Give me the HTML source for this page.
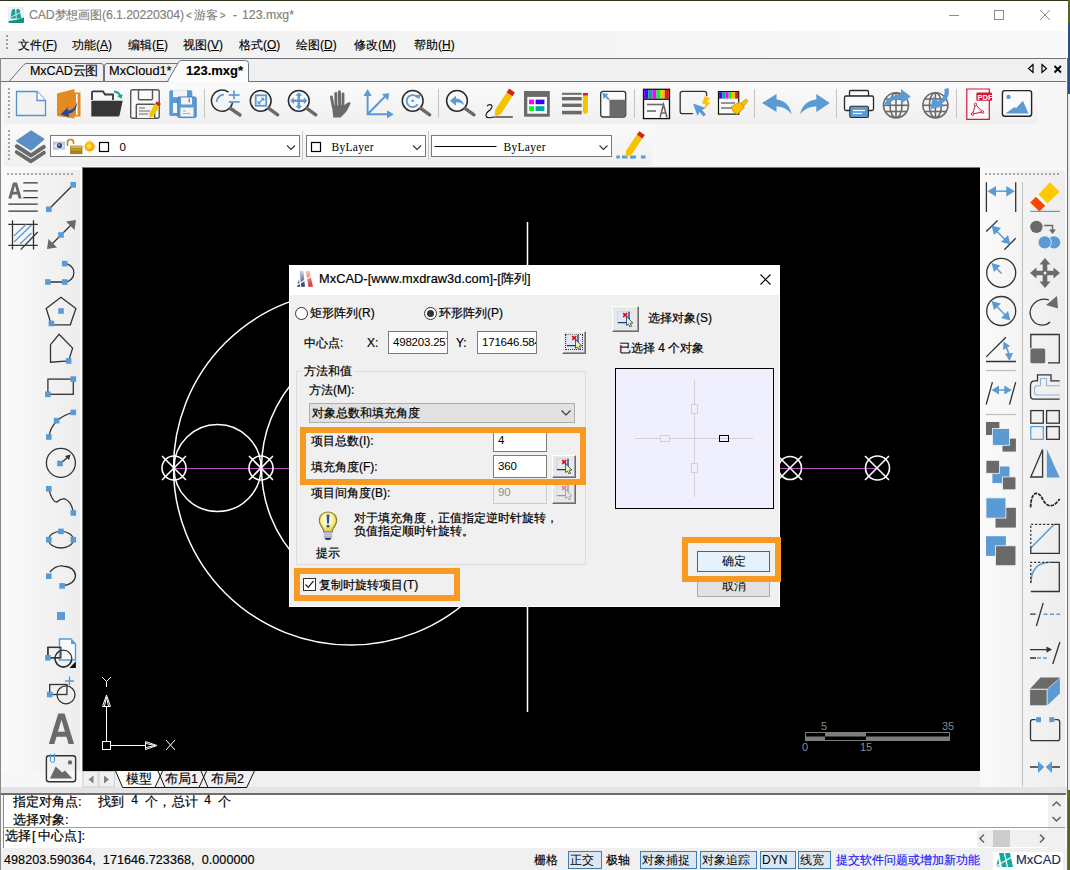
<!DOCTYPE html>
<html><head><meta charset="utf-8">
<style>
*{box-sizing:border-box;margin:0;padding:0}
html,body{width:1070px;height:870px;overflow:hidden;background:#f7f7f7;font-family:"Liberation Sans",sans-serif;font-size:12px;color:#000}
.a{position:absolute}
svg{position:absolute;overflow:visible}
.t{position:absolute;white-space:nowrap;line-height:14px}
u{text-decoration:underline}

.ed{background:#fff;border:1px solid #7a7a7a;padding:3px 0 0 4px;line-height:15px;overflow:hidden;white-space:nowrap;font-size:11.5px;letter-spacing:-0.2px}
.pk{width:24px;height:23px;background:#e8e8e8;border:1px solid;border-color:#fff #6a6a6a #6a6a6a #fff;box-shadow:inset -1px -1px 0 #a0a0a0}
.btn{width:73px;height:21px;background:#e1e1e1;border:1px solid #adadad;text-align:center;line-height:19px}
.ob{border:6px solid #f79a22}
.cm{font-size:13px;white-space:pre;line-height:15px}
.mo{font-family:"Liberation Mono",monospace;font-size:12px}
.sb{top:851px;height:18px;border:1px solid #3c7fb1;background:#dbe7f3;text-align:left;padding-left:1px;line-height:16px;white-space:nowrap;overflow:hidden}
.t{-webkit-text-stroke-width:0.15px}
#dlg .t,.cm{-webkit-text-stroke-width:0.2px}
</style></head><body>

<svg width="0" height="0" style="position:absolute">
<defs>
<linearGradient id="pkg" x1="0" y1="0" x2="1" y2="1"><stop offset="0" stop-color="#c9d6e6"/><stop offset="1" stop-color="#f4f9ff"/></linearGradient>
<symbol id="pickic" viewBox="0 0 16 16">
<rect x="0.8" y="0.8" width="11.5" height="10.5" fill="#dfe9f5" stroke="#b8c8dc" stroke-width="0.6"/>
<path d="M0.8 11.6L12 11.6L12 0.8" fill="none" stroke="#1a3a7a" stroke-width="1.3"/>
<path d="M6.2 2.2L10.2 5.8M10.2 2.2L6.2 5.8" stroke="#e00" stroke-width="1.6"/>
<path d="M9.5 5.5L9.5 14.5L11.5 13L13 16L14.6 15.2L13.3 12.3L15.8 12Z" fill="#f6f3a0" stroke="#1a3a7a" stroke-width="0.8"/>
</symbol>
</defs></svg>
<!-- frame -->
<div class="a" style="left:0;top:0;width:1070px;height:1px;background:#2c3318"></div>
<div class="a" style="left:1068px;top:0;width:2px;height:23px;background:#56661e"></div>
<div class="a" style="left:1068px;top:23px;width:2px;height:71px;background:#2c4f8c"></div>
<div class="a" style="left:1068px;top:94px;width:2px;height:696px;background:#ececec"></div>
<div class="a" style="left:1068px;top:790px;width:2px;height:80px;background:#56661e"></div>
<div class="a" style="left:1067px;top:58px;width:1px;height:812px;background:#6b6b6b"></div>
<div class="a" style="left:0;top:31px;width:1px;height:839px;background:#8a8a8a"></div>
<!-- title bar -->
<div class="a" style="left:0;top:1px;width:1068px;height:30px;background:#fff"></div>
<svg style="left:0;top:0" width="30" height="30" viewBox="0 0 30 30">
<rect x="8" y="7" width="16" height="16" rx="1.5" fill="#efefef"/>
<path d="M10.3 18.5L11.8 10.5Q12.2 9 13.8 9L14.5 9Q15.3 9 15.4 10.5L16.2 18.5Z M16.2 18.5L16 10.5Q16 9 17.5 9L18.3 9Q19.6 9 19.9 10.5L21.3 18.5Z" fill="#1aa193"/><path d="M15.8 9L16.2 18.5" stroke="#efefef" stroke-width="0.8"/>
<path d="M10 17.5L21.5 12" stroke="#efefef" stroke-width="0.9"/>
<path d="M8.5 21Q16 20.5 24 17.5L24 22Q24 23 23 23L9.5 23Q8.5 23 8.5 22Z" fill="#148f80"/>
</svg>
<div class="t" style="left:29px;top:8px;color:#808080;font-size:12.3px;letter-spacing:-0.12px">CAD梦想画图(6.1.20220304)</div>
<div class="t" style="left:186px;top:8px;color:#808080;font-size:12.3px"><span style="font-size:10px;margin-right:2px">&lt;</span>游客<span style="font-size:10px;margin-left:2px">&gt;</span></div>
<div class="t" style="left:233px;top:8px;color:#808080;font-size:12.3px">-</div>
<div class="t" style="left:242px;top:8px;color:#808080;font-size:12.3px">123.mxg*</div>
<svg style="left:949px;top:10px" width="102" height="11" viewBox="0 0 102 11">
<g stroke="#8c8c8c" stroke-width="1" fill="none">
<line x1="0" y1="5.5" x2="10" y2="5.5"/>
<rect x="45.5" y="0.5" width="9" height="9"/>
<path d="M91 0L101 10M101 0L91 10"/>
</g></svg>
<!-- menu bar -->
<div class="a" style="left:0;top:31px;width:1068px;height:27px;background:linear-gradient(90deg,#f0f0f0,#f9f9f9)"></div>
<div class="a" style="left:6px;top:35px;width:2px;height:16px;background:repeating-linear-gradient(#a0a0a0 0 2px,transparent 2px 4px)"></div>
<div class="t" style="left:18px;top:38px">文件(<u>F</u>)</div>
<div class="t" style="left:72px;top:38px">功能(<u>A</u>)</div>
<div class="t" style="left:128px;top:38px">编辑(<u>E</u>)</div>
<div class="t" style="left:183px;top:38px">视图(<u>V</u>)</div>
<div class="t" style="left:239px;top:38px">格式(<u>O</u>)</div>
<div class="t" style="left:296px;top:38px">绘图(<u>D</u>)</div>
<div class="t" style="left:354px;top:38px">修改(<u>M</u>)</div>
<div class="t" style="left:414px;top:38px">帮助(<u>H</u>)</div>
<!-- tab strip -->
<div class="a" style="left:1px;top:58px;width:1065px;height:1px;background:#6e737a"></div>
<div class="a" style="left:1px;top:59px;width:1065px;height:22px;background:#f0f0f0"></div>
<div class="a" style="left:1px;top:81px;width:1065px;height:1px;background:#6e737a"></div>
<svg style="left:0;top:58px" width="260" height="25" viewBox="0 58 260 25">
<path d="M9.5 81L24 64.5Q25 63.5 27 63.5L101 63.5Q103.5 63.5 103.5 66L103.5 81" fill="#f0f0f0" stroke="#6e737a" stroke-width="1"/>
<path d="M104.5 81L104.5 66Q104.5 63.5 107 63.5L178 63.5" fill="#f0f0f0" stroke="#6e737a" stroke-width="1"/>
<path d="M167.5 81.5L179 61.5Q180 60.5 182 60.5L245.5 60.5Q248.5 60.5 248.5 63.5L248.5 81.5Z" fill="#fcfcfc" stroke="#6e737a" stroke-width="1"/>
<rect x="168.5" y="81" width="79.5" height="1.5" fill="#fcfcfc"/>
</svg>
<div class="t" style="left:30px;top:64px;font-size:12.5px;letter-spacing:-0.1px">MxCAD云图</div>
<div class="t" style="left:109px;top:64px;font-size:12.8px">MxCloud1*</div>
<div class="t" style="left:186px;top:64px;font-size:13px;font-weight:bold">123.mxg*</div>
<svg style="left:1027px;top:63px" width="36" height="11" viewBox="0 0 36 11">
<path d="M6 1.5L1.5 5.5L6 9.5Z" fill="none" stroke="#000" stroke-width="1.2"/>
<path d="M15 1.5L19.5 5.5L15 9.5Z" fill="none" stroke="#000" stroke-width="1.2"/>
<path d="M27.5 3L34 9.5M34 3L27.5 9.5" stroke="#000" stroke-width="1.8"/>
</svg>
<!-- toolbar bands -->
<div class="a" style="left:4px;top:84px;width:1034px;height:40px;background:linear-gradient(#fafafa,#efefef);border-radius:4px 0 5px 0"></div>
<div class="a" style="left:4px;top:126px;width:648px;height:40px;background:linear-gradient(#fafafa,#efefef);border-radius:4px 0 5px 0"></div>
<div class="a" style="left:8px;top:88px;width:2px;height:30px;background:repeating-linear-gradient(#a8a8a8 0 2px,transparent 2px 4px)"></div>
<div class="a" style="left:8px;top:130px;width:2px;height:30px;background:repeating-linear-gradient(#a8a8a8 0 2px,transparent 2px 4px)"></div>
<svg style="left:0;top:80px" width="1070" height="90" viewBox="0 80 1070 90">
<defs>
<g id="mag"><circle cx="0" cy="0" r="10.4" fill="#f8f8f8" stroke="#2a2a2a" stroke-width="1.5"/><path d="M8 7.6L17 14" stroke="#6a6a6a" stroke-width="3.4" stroke-linecap="round"/></g>
</defs>
<!-- separators -->
<g stroke="#c4c4c4" stroke-width="1">
<line x1="204.5" y1="89" x2="204.5" y2="118"/><line x1="438.5" y1="89" x2="438.5" y2="118"/>
<line x1="634.5" y1="89" x2="634.5" y2="118"/><line x1="754.5" y1="89" x2="754.5" y2="118"/>
<line x1="836.5" y1="89" x2="836.5" y2="118"/><line x1="956.5" y1="89" x2="956.5" y2="118"/>
</g>
<!-- 1 new -->
<path d="M16.5 91.5L37 91.5L45.5 100.5L45.5 115.5L16.5 115.5Z" fill="#f2f2f2" stroke="#5a92c8" stroke-width="1.3"/>
<path d="M37 91.5L37 100.5L45.5 100.5" fill="#fff" stroke="#5a92c8" stroke-width="1.3"/>
<!-- 2 open orange -->
<path d="M74 92.5L80.5 92.5L80.5 116.5L74 116.5Z" fill="#e38b22"/>
<rect x="76" y="94" width="1.6" height="21" fill="#fff"/>
<path d="M57 93.5L74.5 89L74.5 118.5L57 116Z" fill="#e38b22"/>
<path d="M76.8 101.5C76 107 73 110 67.5 110.5L68 107L60.5 114.5L69 117L68.5 113.8C74 113 77.5 108 76.8 101.5Z" fill="#1b4a9a"/>
<!-- 3 open folder -->
<path d="M92 100L92 92.5Q92 91.3 93.3 91.3L103 91.3L105 94.5L113 94.5L113 100" fill="none" stroke="#363636" stroke-width="1.8"/>
<path d="M91.3 116.5L91.3 101.5Q91.3 100.8 92.5 100.8L122.7 100.8L119.5 115.5Q119.3 116.5 118 116.5Z" fill="#363636"/>
<path d="M114 91.5Q119 92 120 96" fill="none" stroke="#1aa39a" stroke-width="1.8"/><path d="M117 96L121.5 99L122.5 94Z" fill="#1aa39a"/>
<!-- 4 save -->
<rect x="130.7" y="89.7" width="28.5" height="28.5" rx="2" fill="#fafafa" stroke="#555" stroke-width="1.4"/>
<path d="M138.5 89.7L138.5 98.5Q138.5 99.7 139.7 99.7L151.3 99.7Q152.5 99.7 152.5 98.5L152.5 89.7" fill="none" stroke="#555" stroke-width="1.4"/>
<path d="M136.3 118L136.3 105.5Q136.3 104.3 137.5 104.3L153.5 104.3Q154.7 104.3 154.7 105.5L154.7 118" fill="#f4f4f4" stroke="#555" stroke-width="1.4"/>
<g stroke="#888" stroke-width="1.3"><line x1="139" y1="108" x2="145" y2="108"/><line x1="139" y1="111" x2="150" y2="111"/><line x1="139" y1="114" x2="148" y2="114"/></g>
<path d="M149.5 118.0 L153.7 115.9 L159.4 106.4 L155.1 103.8 L149.4 113.3Z" fill="#f5c400"/><path d="M159.4 106.4 L160.9 103.8 L156.7 101.2 L155.1 103.8Z" fill="#d42020"/>
<!-- 5 save as -->
<rect x="169.3" y="90.2" width="23" height="25.8" rx="1.5" fill="#5b9bd5"/>
<rect x="173" y="90.2" width="14" height="7" fill="#f4f4f4"/><rect x="173" y="103" width="5" height="10" fill="#f4f4f4"/>
<rect x="177.7" y="96.9" width="18.5" height="20.7" rx="1.5" fill="#5b9bd5" stroke="#3a73b0" stroke-width="0.8"/>
<rect x="181" y="97.5" width="11" height="7" fill="#f4f4f4"/><rect x="188.5" y="98.5" width="1.5" height="4" fill="#888"/>
<rect x="180.5" y="107.5" width="13" height="9" fill="#f4f4f4"/>
<g stroke="#999" stroke-width="0.8"><line x1="183" y1="111" x2="186" y2="111"/><line x1="183" y1="113.5" x2="190" y2="113.5"/></g>
<!-- 6 zoom realtime -->
<path d="M232.5 102.5A10.6 10.6 0 1 1 228.5 92.2" fill="none" stroke="#2a2a2a" stroke-width="1.5"/>
<path d="M230.5 108.5L240 115" stroke="#6a6a6a" stroke-width="3.4" stroke-linecap="round"/>
<path d="M216.7 101.9A7.2 7.2 0 0 1 223.9 94.7" fill="none" stroke="#5b9bd5" stroke-width="1.7"/>
<g stroke="#5b9bd5" stroke-width="1.7"><line x1="228.7" y1="95" x2="239.6" y2="95"/><line x1="234" y1="90.6" x2="234" y2="99.3"/><line x1="228.7" y1="101.9" x2="239.6" y2="101.9"/></g>
<!-- 7 zoom window -->
<g transform="translate(260.7 100.8)"><use href="#mag"/><rect x="-5" y="-5.5" width="10.5" height="10.5" fill="none" stroke="#5b9bd5" stroke-width="1.8"/><path d="M-2.5 3L3 -2.5M-2.5 3L-2.5 0.5M-2.5 3L0 3M3 -2.5L0.5 -2.5M3 -2.5L3 0" stroke="#5b9bd5" stroke-width="1.3" fill="none"/></g>
<!-- 8 zoom pan -->
<g transform="translate(298.8 100.8)"><use href="#mag"/><path d="M0 -8.5L3.5 -5L1.2 -5L1.2 -1.2L5 -1.2L5 -3.5L8.5 0L5 3.5L5 1.2L1.2 1.2L1.2 5L3.5 5L0 8.5L-3.5 5L-1.2 5L-1.2 1.2L-5 1.2L-5 3.5L-8.5 0L-5 -3.5L-5 -1.2L-1.2 -1.2L-1.2 -5L-3.5 -5Z" fill="#5b9bd5"/></g>
<!-- 9 hand -->
<path d="M333.3 117.6L332 106L344.5 105L348 102.5Q350.5 101.5 350.6 103.5L346.5 111.5L340.6 117.6Z" fill="#6a6a6a"/>
<g stroke="#6a6a6a" stroke-linecap="round" fill="none">
<path d="M331.4 97L333.2 107" stroke-width="2.8"/>
<path d="M335.8 93.5L336 106" stroke-width="3"/>
<path d="M339.4 91.8L339.7 106" stroke-width="3"/>
<path d="M343 93.8L343 106" stroke-width="2.8"/>
</g>
<!-- 10 axes -->
<g stroke="#5b9bd5" stroke-width="2" fill="none"><path d="M367.6 95L367.6 114.3L388 114.3M367.6 114.3L385 96.5"/></g>
<path d="M363.5 96L367.6 89L371.7 96Z M387 110.2L393.8 114.3L387 118.4Z M382 94L389.3 93.2L388 100.5Z" fill="#5b9bd5"/>
<!-- 11 zoom rotate -->
<g transform="translate(412.7 100.8)"><use href="#mag"/><path d="M5 -3A6 6 0 1 0 5 3.5" fill="none" stroke="#5b9bd5" stroke-width="1.8"/><path d="M3 -5.5L6.8 -1.5L7.8 -6.5Z" fill="#5b9bd5"/><circle cx="0" cy="0" r="1.3" fill="#5b9bd5"/></g>
<!-- 12 zoom prev -->
<g transform="translate(457 100.8)"><use href="#mag"/><path d="M-7 0L-1 -5L-1 -2.3Q5 -2 7.5 4.5Q4 1 -1 1.5L-1 5Z" fill="#5b9bd5"/></g>
<!-- 13 pencil line -->
<path d="M494 117Q487 119 486 116Q485.5 113 490 110Q493 107 491.5 105Q489 104 487 106" fill="none" stroke="#111" stroke-width="1.1"/>
<line x1="494" y1="117" x2="512.8" y2="117" stroke="#555" stroke-width="1.6"/>
<path d="M494.8 117.0 L501.0 113.9 L512.5 96.2 L506.6 92.4 L495.1 110.1Z" fill="#f5c400"/><path d="M512.5 96.2 L514.9 92.4 L509.1 88.6 L506.6 92.4Z" fill="#d42020"/>
<!-- 14 table -->
<rect x="524" y="91" width="25.8" height="25.7" fill="#6a6a6a"/><rect x="527.3" y="96.9" width="19.7" height="16.8" fill="#fafafa"/>
<rect x="529" y="99.6" width="5" height="4.6" fill="#f0f"/><rect x="535.6" y="99.6" width="8.8" height="4.6" fill="#3300ff"/>
<rect x="529" y="106.2" width="5" height="4.8" fill="#00ff20"/><rect x="535.6" y="106.2" width="8.8" height="4.8" fill="#00a89c"/>
<!-- 15 list pencil -->
<g fill="#6a6a6a"><rect x="562" y="92.8" width="19.7" height="2"/><rect x="562" y="97" width="19.7" height="3.4"/><rect x="562" y="103.6" width="19.7" height="3.4"/><rect x="562" y="110.8" width="19.7" height="3.6"/></g>
<path d="M582.9 95L587.9 95L587.9 112Q585.4 116 582.9 112Z" fill="#f5c400"/><rect x="582.9" y="93" width="5" height="2.4" fill="#d42020"/>
<!-- 16 square arrow -->
<rect x="600.7" y="91.3" width="25" height="25.7" rx="2.5" fill="#fafafa" stroke="#333" stroke-width="1.3"/>
<path d="M609.5 99.7L625.7 99.7L625.7 114.5Q625.7 117 623 117L609.5 117Z" fill="#6a6a6a"/>
<path d="M609 99.5L604.5 95" stroke="#5b9bd5" stroke-width="1.8"/><path d="M602.5 93L608.5 94L603.5 99Z" fill="#5b9bd5"/>
<!-- 17 color bar -->
<rect x="643.5" y="89.3" width="26" height="29.3" fill="#fafafa" stroke="#111" stroke-width="1.3"/>
<rect x="644.2" y="90" width="4.1" height="8.6" fill="#4b00ff"/><rect x="648.3" y="90" width="4.1" height="8.6" fill="#00a89c"/><rect x="652.4" y="90" width="4.1" height="8.6" fill="#ff00ff"/><rect x="656.5" y="90" width="4.1" height="8.6" fill="#00ff20"/><rect x="660.6" y="90" width="4.1" height="8.6" fill="#ffc000"/><rect x="664.7" y="90" width="4.2" height="8.6" fill="#d42020"/>
<rect x="643.5" y="98.6" width="26" height="1.3" fill="#111"/>
<g stroke="#6a6a6a" stroke-width="1.6" fill="none"><line x1="647" y1="104.5" x2="664" y2="104.5"/><line x1="647" y1="111" x2="656" y2="111"/><path d="M660 117.5L663.5 104.5L667 117.5M661.3 113L665.8 113"/></g>
<!-- 18 select lightning -->
<path d="M693 113.7L682.5 113.7Q680.2 113.7 680.2 111.5L680.2 93.5Q680.2 91.3 682.5 91.3L704.3 91.3Q706.6 91.3 706.6 93.5L706.6 96" fill="none" stroke="#333" stroke-width="1.3"/>
<path d="M693 103.6L706 108L702 110L706 114.5L703.5 116.5L699.5 112L697.5 116Z" fill="#5b9bd5"/>
<path d="M705 96L710 98.5L707 102L710.5 102.5L704 109.5L705.5 104L702 103.5Z" fill="#ffc000"/>
<!-- 19 brush -->
<rect x="718.5" y="91.6" width="20.2" height="22.5" fill="#fafafa" stroke="#111" stroke-width="1.2"/>
<rect x="719.1" y="92.2" width="3.2" height="6.4" fill="#4b00ff"/><rect x="722.3" y="92.2" width="3.2" height="6.4" fill="#00a89c"/><rect x="725.5" y="92.2" width="3.2" height="6.4" fill="#ff00ff"/><rect x="728.7" y="92.2" width="3.2" height="6.4" fill="#00ff20"/><rect x="731.9" y="92.2" width="3.2" height="6.4" fill="#ffc000"/><rect x="735.1" y="92.2" width="3.2" height="6.4" fill="#d42020"/>
<g stroke="#6a6a6a" stroke-width="1.4"><line x1="721" y1="103" x2="735" y2="103"/><line x1="721" y1="108" x2="732" y2="108"/></g>
<path d="M741 103L746 99L748 101L744 106Z" fill="#ffc000" stroke="#9a7a00" stroke-width="0.5"/>
<path d="M731 107L739 102L744.5 107.5L737 114.5Q733 113 731 107Z" fill="#ffc000" stroke="#9a7a00" stroke-width="0.6"/>
<!-- 20 undo / 21 redo -->
<path d="M761.9 103L776.5 94.1L776.5 99.5Q789 101 791.6 114.3Q785 106 776.5 106.5L776.5 112Z" fill="#5b9bd5"/>
<path d="M829.8 103L816.3 94.1L816.3 99.5Q803 101 800 114.3Q807 106 816.3 106.5L816.3 112Z" fill="#5b9bd5"/>
<!-- 22 print -->
<rect x="849.5" y="90.5" width="19" height="6" rx="1.2" fill="#fafafa" stroke="#2a2a2a" stroke-width="1.3"/>
<rect x="844.5" y="96" width="29" height="14.5" rx="1.5" fill="#fafafa" stroke="#2a2a2a" stroke-width="1.3"/>
<rect x="849.8" y="106.3" width="18.6" height="11.2" rx="1.2" fill="#5b9bd5" stroke="#2a2a2a" stroke-width="1.1"/>
<g stroke="#fff" stroke-width="1.2"><line x1="853" y1="110.5" x2="865" y2="110.5"/><line x1="853" y1="113.5" x2="862" y2="113.5"/></g>
<!-- 23/24 globes -->
<g fill="none" stroke="#6a6a6a" stroke-width="1.6">
<circle cx="896" cy="105.3" r="12.5"/><ellipse cx="896" cy="105.3" rx="6" ry="12.5"/><line x1="896" y1="92.8" x2="896" y2="117.8"/><line x1="883.5" y1="105.3" x2="908.5" y2="105.3"/><line x1="885" y1="99" x2="907" y2="99"/><line x1="885" y1="111.5" x2="907" y2="111.5"/>
<circle cx="935.4" cy="105.3" r="12.5"/><ellipse cx="935.4" cy="105.3" rx="6" ry="12.5"/><line x1="935.4" y1="92.8" x2="935.4" y2="117.8"/><line x1="922.9" y1="105.3" x2="947.9" y2="105.3"/><line x1="924.4" y1="99" x2="946.4" y2="99"/><line x1="924.4" y1="111.5" x2="946.4" y2="111.5"/>
</g>
<path d="M886.5 104.5Q890 96.5 902.5 96.5" fill="none" stroke="#5b9bd5" stroke-width="4.2"/><path d="M901 89L910.8 96.5L901 104Z" fill="#5b9bd5"/>
<path d="M946.5 88.5Q948.5 99.5 937 103.5" fill="none" stroke="#5b9bd5" stroke-width="4.2"/><path d="M930.5 109L933 96.5L943.5 106.5Z" fill="#5b9bd5"/>
<!-- 25 pdf -->
<path d="M966.8 89L989.3 89L989.3 119.4L966.8 119.4Z" fill="#fafafa" stroke="#d8143a" stroke-width="1.2"/>
<rect x="976.4" y="92.4" width="15.6" height="8.4" rx="1" fill="#d8143a"/>
<text x="977.4" y="99.6" font-family="Liberation Sans" font-size="7.6" font-weight="bold" fill="#fff">PDF</text>
<path d="M975.5 104.5L972.5 114M975.5 104.5L982.5 112M972.5 114L982.5 112" fill="none" stroke="#d8143a" stroke-width="1"/>
<circle cx="975.5" cy="104.5" r="1.3" fill="#fafafa" stroke="#d8143a" stroke-width="1"/><circle cx="972.5" cy="114" r="1.3" fill="#fafafa" stroke="#d8143a" stroke-width="1"/><circle cx="982.5" cy="112" r="1.3" fill="#fafafa" stroke="#d8143a" stroke-width="1"/>
<!-- 26 image -->
<rect x="1002.4" y="90.6" width="29.2" height="25.6" rx="2.5" fill="#fafafa" stroke="#222" stroke-width="1.4"/>
<circle cx="1008.5" cy="96.9" r="2.2" fill="#5b9bd5"/>
<path d="M1005.5 113.5L1014.5 107L1016 108.3L1022.9 100.8L1028.5 113.5Z" fill="#5b9bd5"/>
<!-- toolbar 2 -->
<path d="M16.8 152L31 161.2L43.8 152.5" fill="none" stroke="#6a6a6a" stroke-width="4" stroke-linejoin="round" stroke-linecap="round"/>
<path d="M16.8 146.3L31 155.5L43.8 146.8" fill="none" stroke="#f6f6f6" stroke-width="6.2" stroke-linejoin="round" stroke-linecap="round"/>
<path d="M16.8 146.3L31 155.5L43.8 146.8" fill="none" stroke="#6a6a6a" stroke-width="4" stroke-linejoin="round" stroke-linecap="round"/>
<path d="M17 141L31 131.3L43.7 139.2L31 149.8Z" fill="#5b8ec4" stroke="#f6f6f6" stroke-width="3.6" stroke-linejoin="round"/>
<path d="M17 141L31 131.3L43.7 139.2L31 149.8Z" fill="#5b8ec4" stroke="#5b8ec4" stroke-width="1.6" stroke-linejoin="round"/>
</svg>
<!-- toolbar2 combos -->
<div class="a" style="left:50px;top:135px;width:250px;height:22px;background:#fff;border:1px solid #7a7a7a"></div>
<svg style="left:0;top:128px" width="660" height="40" viewBox="0 128 660 40">
<defs><radialGradient id="sun" cx="0.45" cy="0.45" r="0.55"><stop offset="0" stop-color="#fff27a"/><stop offset="0.5" stop-color="#ffc800"/><stop offset="1" stop-color="#f08a00"/></radialGradient>
<linearGradient id="lockg" x1="0" y1="0" x2="0" y2="1"><stop offset="0" stop-color="#f0d060"/><stop offset="1" stop-color="#a07010"/></linearGradient></defs>
<!-- eye -->
<rect x="53" y="141.6" width="12" height="8" fill="#b8c4d8"/>
<path d="M53 146Q59 140 65 146Q59 151 53 146Z" fill="#dfe6f0"/>
<circle cx="59.5" cy="145.5" r="2.6" fill="#2a4a7a"/><circle cx="59" cy="145" r="0.8" fill="#fff"/>
<!-- lock -->
<path d="M67.5 146L67.5 142Q67.5 139.5 70.5 139.5Q73.5 139.5 73.5 142L73.5 144" fill="none" stroke="#b88a20" stroke-width="1.6"/>
<rect x="70.5" y="146" width="11.5" height="7.8" fill="url(#lockg)" stroke="#8a6a10" stroke-width="0.6"/>
<g stroke="#8a6a10" stroke-width="0.6"><line x1="70.5" y1="148.5" x2="82" y2="148.5"/><line x1="70.5" y1="151" x2="82" y2="151"/></g>
<!-- sun -->
<circle cx="89.6" cy="146.5" r="5" fill="url(#sun)"/>
<g fill="#ffd800"><circle cx="89.6" cy="140.4" r="0.7"/><circle cx="89.6" cy="152.6" r="0.7"/><circle cx="83.6" cy="146.5" r="0.7"/><circle cx="95.6" cy="146.5" r="0.7"/></g>
<!-- square -->
<rect x="99.5" y="142.5" width="9" height="9" fill="#fff" stroke="#000" stroke-width="1.2"/>
<text x="119.5" y="150.5" font-family="Liberation Sans" font-size="11.5" fill="#000">0</text>
<path d="M287 145.5L291 149.5L295 145.5" fill="none" stroke="#333" stroke-width="1.1"/>
<line x1="302.5" y1="131" x2="302.5" y2="160" stroke="#c8c8c8"/>
<rect x="306.5" y="135.5" width="119" height="21" fill="#fff" stroke="#7a7a7a"/>
<rect x="311.5" y="142.5" width="9" height="9" fill="#fff" stroke="#000" stroke-width="1.2"/>
<text x="331.5" y="150.5" font-family="Liberation Serif" font-size="11.5" letter-spacing="0.3" fill="#000">ByLayer</text>
<path d="M413 145.5L417 149.5L421 145.5" fill="none" stroke="#333" stroke-width="1.1"/>
<line x1="428.5" y1="131" x2="428.5" y2="160" stroke="#c8c8c8"/>
<rect x="431.5" y="135.5" width="180" height="21" fill="#fff" stroke="#7a7a7a"/>
<line x1="434.5" y1="146.5" x2="496.5" y2="146.5" stroke="#000" stroke-width="1"/>
<text x="503.5" y="150.5" font-family="Liberation Serif" font-size="11.5" letter-spacing="0.3" fill="#000">ByLayer</text>
<path d="M599.5 145.5L603.5 149.5L607.5 145.5" fill="none" stroke="#333" stroke-width="1.1"/>
<!-- pencil -->
<g fill="#5b9bd5"><rect x="616.3" y="155.5" width="3.5" height="3"/><rect x="622" y="155.5" width="5.5" height="3"/><rect x="630" y="155.5" width="6" height="3"/><rect x="641" y="155.5" width="4.5" height="3"/></g>
<path d="M625.8 157.0 L631.7 154.4 L642.4 138.6 L636.8 134.8 L626.1 150.5Z" fill="#f5c400"/><path d="M642.4 138.6 L644.8 135.1 L639.2 131.3 L636.8 134.8Z" fill="#d42020"/>
</svg>
<!-- canvas -->
<div class="a" style="left:82px;top:167px;width:898px;height:604px;background:#000;border-left:1px solid #7a7a7a;border-top:1px solid #7a7a7a"></div>

<!-- canvas drawing -->
<svg class="a" style="left:0;top:0" width="1070" height="870" viewBox="0 0 1070 870">
<g fill="none" stroke="#fff" stroke-width="1.5">
<line x1="527.5" y1="222" x2="527.5" y2="712"/>
<circle cx="350.5" cy="468" r="177"/>
<circle cx="394.5" cy="468" r="133"/>
<circle cx="217.5" cy="468" r="43.5"/>
</g>
<line x1="174" y1="468.5" x2="877" y2="468.5" stroke="#c050c8" stroke-width="1.2"/>
<g fill="none" stroke="#fff" stroke-width="1.6">
<circle cx="174" cy="468" r="12"/><path d="M162 456L186 480M186 456L162 480"/>
<circle cx="261" cy="468" r="12"/><path d="M249 456L273 480M273 456L249 480"/>
<circle cx="790" cy="468" r="11.5"/><path d="M778 456L802 480M802 456L778 480"/>
<circle cx="877.5" cy="468" r="12"/><path d="M865 456L889 480M889 456L865 480"/>
</g>
<!-- UCS -->
<g fill="none" stroke="#fff" stroke-width="1">
<rect x="102.5" y="741.5" width="8" height="8"/>
<line x1="106.5" y1="741" x2="106.5" y2="706"/>
<path d="M102.5 706.5L110.5 706.5L106.5 695ZM104.5 706L106.5 697L108.5 706"/>
<path d="M102 677L106.5 681.5L111 677M106.5 681.5L106.5 687"/>
<line x1="111" y1="745.5" x2="145.5" y2="745.5"/>
<path d="M145.5 741.5L145.5 749.5L157 745.5ZM146 743.5L155 745.5L146 747.5"/>
<path d="M166 740L175 750M175 740L166 750"/>
</g>
<!-- scale bar -->
<g>
<rect x="805.5" y="732.5" width="144" height="8" fill="none" stroke="#7d7d7d" stroke-width="1"/>
<rect x="825" y="733" width="41" height="3.5" fill="#7d7d7d"/>
<rect x="806" y="736.5" width="19" height="4" fill="#7d7d7d"/>
<rect x="866" y="736.5" width="83" height="4" fill="#7d7d7d"/>
</g>
<g fill="#8a8a8a" font-family="Liberation Sans" font-size="11">
<text x="821" y="730">5</text><text x="942" y="730">35</text>
<text x="802" y="751">0</text><text x="860" y="751">15</text>
</g>
</svg>

<!-- dialog -->
<div id="dlg" class="a" style="left:289px;top:265px;width:491px;height:342px;background:#fff">
<div class="a" style="left:1px;top:30px;width:489px;height:311px;background:#f0f0f0"></div>
<svg style="left:0;top:0" width="30" height="30" viewBox="289 265 30 30">
<defs><linearGradient id="lgb" x1="0" y1="0" x2="0" y2="1"><stop offset="0" stop-color="#d0d4de"/><stop offset="1" stop-color="#24386a"/></linearGradient>
<linearGradient id="lgr" x1="0" y1="0" x2="0" y2="1"><stop offset="0" stop-color="#f4c4c4"/><stop offset="1" stop-color="#e0282a"/></linearGradient></defs>
<path d="M296.9 286.8L299 279L300.2 286.8Z M299.6 271L303.4 271L305 286.8L301.2 286.8Z" fill="url(#lgb)"/>
<path d="M305.7 271L309.5 271L313 286.8L308.6 286.8Z" fill="url(#lgr)"/>
<path d="M296.5 285.5L311.5 276" stroke="#fff" stroke-width="1.1"/>
</svg>
<div class="t" style="left:30px;top:7px;font-size:12.8px;letter-spacing:0.05px">MxCAD-[www.mxdraw3d.com]-[阵列]</div>
<svg style="left:471px;top:9px" width="11" height="11" viewBox="0 0 11 11"><path d="M0.5 0.5L10.5 10.5M10.5 0.5L0.5 10.5" stroke="#000" stroke-width="1.1"/></svg>
<!-- radios -->
<div class="a" style="left:6px;top:42px;width:13px;height:13px;border:1px solid #333;border-radius:50%;background:#fff"></div>
<div class="t" style="left:21px;top:41px">矩形阵列(R)</div>
<div class="a" style="left:135px;top:42px;width:13px;height:13px;border:1px solid #333;border-radius:50%;background:#fff"></div>
<div class="a" style="left:138px;top:45px;width:7px;height:7px;border-radius:50%;background:#333"></div>
<div class="t" style="left:150px;top:41px">环形阵列(P)</div>
<!-- center -->
<div class="t" style="left:15px;top:71px">中心点:</div>
<div class="t" style="left:78px;top:71px">X:</div>
<div class="a ed" style="left:99px;top:66px;width:60px;height:23px">498203.257</div>
<div class="t" style="left:167px;top:71px">Y:</div>
<div class="a ed" style="left:188px;top:66px;width:60px;height:23px">171646.584</div>
<div class="a pk" style="left:273px;top:66px;"><div class="a" style="left:2px;top:2px;width:18px;height:16px;border:1px dotted #333"></div><svg style="left:3px;top:2px" width="16" height="16"><use href="#pickic"/></svg></div>
<!-- group -->
<div class="a" style="left:7px;top:106px;width:290px;height:194px;border:1px solid #dcdcdc"></div>
<div class="t" style="left:13px;top:99px;background:#f0f0f0;padding:0 2px">方法和值</div>
<div class="t" style="left:20px;top:118px">方法(M):</div>
<div class="a" style="left:20px;top:138px;width:266px;height:20px;background:#e1e1e1;border:1px solid #adadad"></div>
<div class="t" style="left:23px;top:141px">对象总数和填充角度</div>
<svg style="left:272px;top:145px" width="10" height="6" viewBox="0 0 10 6"><path d="M0.5 0.5L5 5L9.5 0.5" fill="none" stroke="#333" stroke-width="1.1"/></svg>
<div class="t" style="left:22px;top:169px">项目总数(I):</div>
<div class="a ed" style="left:204px;top:164px;width:54px;height:23px">4</div>
<div class="t" style="left:22px;top:195px">填充角度(F):</div>
<div class="a ed" style="left:204px;top:190px;width:54px;height:23px">360</div>
<div class="a pk" style="left:263px;top:190px;"><svg style="left:3px;top:2px" width="16" height="16"><use href="#pickic"/></svg></div>
<div class="t" style="left:22px;top:221px">项目间角度(B):</div>
<div class="a ed" style="left:204px;top:216px;width:54px;height:23px;background:#f0f0f0;border-color:#cccccc;color:#8d8d8d">90</div>
<div class="a pk dis" style="left:263px;top:216px;"><svg style="left:3px;top:2px;opacity:.45" width="16" height="16"><use href="#pickic"/></svg></div>
<svg style="left:29px;top:246px" width="22" height="30" viewBox="0 0 22 30">
<defs><radialGradient id="bulb" cx="0.45" cy="0.4" r="0.6"><stop offset="0" stop-color="#ffffff"/><stop offset="0.55" stop-color="#fbf3a0"/><stop offset="1" stop-color="#d8c030"/></radialGradient></defs>
<path d="M10 1C4.8 1 1.3 4.8 1.3 9.5C1.3 13.5 4 15.5 5.3 18.5L5.8 21L14.2 21L14.7 18.5C16 15.5 18.7 13.5 18.7 9.5C18.7 4.8 15.2 1 10 1Z" fill="url(#bulb)" stroke="#8a7a20" stroke-width="1.1"/>
<path d="M8.6 3.5L11.4 3.5L11 12.5L9 12.5Z" fill="#2a4f8a"/><ellipse cx="10" cy="15.2" rx="1.5" ry="1.4" fill="#2a4f8a"/>
<rect x="5.8" y="21" width="8.4" height="6" fill="#a8acd8"/>
<path d="M5.8 22.8L14.2 22.8M5.8 24.8L14.2 24.8" stroke="#e8e080" stroke-width="0.8"/>
<path d="M6.5 27L13.5 27L12 29L8 29Z" fill="#2a3a6a"/>
</svg>
<div class="t" style="left:65px;top:247px;line-height:13px">对于填充角度，正值指定逆时针旋转，<br>负值指定顺时针旋转。</div>
<div class="t" style="left:27px;top:281px">提示</div>
<!-- checkbox -->
<div class="a" style="left:14px;top:313px;width:13px;height:13px;border:1px solid #333;background:#fff"></div>
<svg style="left:16px;top:315px" width="9" height="9" viewBox="0 0 9 9"><path d="M0.5 4.5L3.2 7.3L8.5 1" fill="none" stroke="#222" stroke-width="1.2"/></svg>
<div class="t" style="left:30px;top:313px">复制时旋转项目(T)</div>
<!-- right side -->
<div class="a pk" style="left:323px;top:41px;width:27px;height:26px"><svg style="left:4px;top:4px" width="16" height="16"><use href="#pickic"/></svg></div>
<div class="t" style="left:359px;top:46px">选择对象(S)</div>
<div class="t" style="left:330px;top:76px">已选择 4 个对象</div>
<div class="a" style="left:326px;top:103px;width:159px;height:141px;background:#efeffd;border:1px solid #000"></div>
<svg style="left:326px;top:103px" width="159" height="141" viewBox="0 0 159 141">
<g stroke="#d2d2d2" stroke-width="1" fill="none">
<line x1="79.5" y1="12" x2="79.5" y2="129"/><line x1="20" y1="70.5" x2="138" y2="70.5"/>
<rect x="76.5" y="36.5" width="6" height="9" fill="#efeffd"/>
<rect x="45.5" y="67.5" width="9" height="6" fill="#efeffd"/>
<rect x="76.5" y="95.5" width="6" height="9" fill="#efeffd"/>
</g>
<rect x="104.5" y="67.5" width="9" height="6" fill="none" stroke="#000" stroke-width="1"/>
</svg>
<div class="a btn" style="left:408px;top:286px;border-color:#0078d7;background:#e5f1fb">确定</div>
<div class="a btn" style="left:408px;top:311px">取消</div>
<!-- highlight boxes -->
<div class="a ob" style="left:11px;top:162px;width:286px;height:58px"></div>
<div class="a ob" style="left:5px;top:303px;width:166px;height:33px"></div>
<div class="a ob" style="left:393px;top:272px;width:99px;height:45px"></div>
</div>
<!-- left toolbar band -->
<div class="a" style="left:1px;top:168px;width:81px;height:603px;background:#f9f9f9"></div>
<div class="a" style="left:4px;top:170px;width:76px;height:601px;background:linear-gradient(90deg,#fafafa,#ededed)"></div>
<div class="a" style="left:7px;top:173px;width:67px;height:2px;background:repeating-linear-gradient(90deg,#a8a8a8 0 2px,transparent 2px 4px)"></div>
<svg style="left:0;top:165px" width="85" height="625" viewBox="0 165 85 625">
<defs><g id="bsq"><rect x="-2.8" y="-2.8" width="5.6" height="5.6" fill="#5b9bd5"/></g></defs>
<g stroke="#333" stroke-width="1.3" fill="none">
<!-- A lines -->
<path d="M23.3 182.8L37.7 182.8M23.3 190.8L37.7 190.8M23.3 197.6L37.7 197.6M8.3 204.2L37.7 204.2M8.3 211.2L37.7 211.2"/>
<!-- line -->
<line x1="48.8" y1="209.3" x2="73.2" y2="184.8"/>
<!-- hatch -->
<path d="M12.5 220.2L12.5 249.6M33.5 220.2L33.5 249.6M8.3 224.4L37.7 224.4M8.3 245.4L37.7 245.4M20.7 249.6L37.7 232"/>
<!-- dim arrow -->
<line x1="50" y1="246" x2="73" y2="223"/>
<!-- arc -->
<path d="M48 282L64.7 282M64.7 263.6A9.2 9.2 0 0 1 64.7 282"/>
<!-- pentagon -->
<path d="M60.9 297.2L75.9 308.4L70.3 324.8L51.4 324.8L46.2 308.4Z"/>
<!-- polygon -->
<path d="M59.1 334.3L72.6 348.1L68.6 361L50.5 362.2L50.5 344.7Z"/>
<!-- rect -->
<rect x="47.9" y="379.1" width="25.4" height="15.2"/>
<!-- 3pt arc -->
<path d="M48.8 437Q52 418 73.3 412.4"/>
<!-- circle -->
<circle cx="60.9" cy="462.9" r="14.5"/>
<line x1="61" y1="463" x2="68" y2="457"/>
<!-- spline -->
<path d="M48.8 488.8Q52 502 57 502Q61 498 65 499Q72 502 73.3 512.9"/>
<!-- ellipse -->
<ellipse cx="61" cy="539.7" rx="12.3" ry="8.3"/>
<!-- ellipse arc -->
<path d="M50 572Q56 565 63 566Q75 567 75.5 576Q75 584 62 586"/>
<!-- block insert -->
<rect x="47.9" y="647.4" width="16.4" height="10.4"/>
<circle cx="63.4" cy="658.6" r="8.4"/>
<!-- block make -->
<rect x="49.7" y="684.5" width="17.2" height="10"/>
<circle cx="66" cy="694.8" r="9"/>
<!-- image -->
<rect x="46.4" y="755.8" width="29.2" height="26" rx="2.5" stroke-width="1.4"/>
</g>
<path d="M8.3 198.4L13 182.4L17 182.4L21.7 198.4L18.6 198.4L17.5 194.6L12.5 194.6L11.4 198.4Z M13.3 191.8L16.7 191.8L15 185.6Z" fill="#6a6a6a" fill-rule="evenodd"/>
<!-- hatch fill -->
<path d="M14 236L26 224.5M14 242L31.5 225M20 244L31.5 233" stroke="#5b9bd5" stroke-width="1.4"/>
<use href="#bsq" x="48.8" y="209.3"/><use href="#bsq" x="73.2" y="184.8"/>
<path d="M47 249L48.5 239L57 247.5Z M76 220L74.5 230L66 221.5Z" fill="#6a6a6a"/>
<use href="#bsq" x="61" y="235"/>
<use href="#bsq" x="47.9" y="282"/><use href="#bsq" x="64.7" y="282"/><use href="#bsq" x="64.7" y="263.6"/>
<use href="#bsq" x="61" y="311"/><use href="#bsq" x="51.4" y="323.5"/>
<use href="#bsq" x="68.6" y="361"/>
<use href="#bsq" x="73.3" y="379.1"/><use href="#bsq" x="47.9" y="394.3"/>
<use href="#bsq" x="48.8" y="437"/><use href="#bsq" x="56.6" y="420.7"/><use href="#bsq" x="73.3" y="412.4"/>
<use href="#bsq" x="60" y="463.5"/><path d="M70.5 454.5L65 456L69 460Z" fill="#333"/>
<use href="#bsq" x="48.8" y="488.8"/><use href="#bsq" x="73.3" y="512.9"/>
<use href="#bsq" x="48.8" y="539.7"/><use href="#bsq" x="60.9" y="531.4"/><use href="#bsq" x="73.3" y="539.7"/>
<use href="#bsq" x="48.8" y="576.2"/><use href="#bsq" x="62.1" y="585.9"/>
<rect x="57" y="612" width="8" height="8" fill="#5b9bd5"/>
<path d="M59.5 639L71 639L75.5 644L75.5 660L59.5 660Z" fill="#fafafa" stroke="#5b9bd5" stroke-width="1.4"/>
<path d="M71 639L71 644L75.5 644Z" fill="#5b9bd5"/>
<rect x="47.9" y="647.4" width="13" height="10.4" fill="none" stroke="#333" stroke-width="1.3"/>
<circle cx="63.4" cy="658.6" r="8.4" fill="none" stroke="#333" stroke-width="1.3"/>
<path d="M69.5 668.1L75.9 661.2L75.9 668.1Z" fill="#111"/>
<use href="#bsq" x="47.9" y="657.8"/>
<path d="M69.5 676.5L69.5 685.5M65 681L74 681" stroke="#5b9bd5" stroke-width="1.4"/>
<use href="#bsq" x="49.7" y="694.5"/>
<path d="M48.8 744L58.3 713.6L64.6 713.6L74.1 744L68.6 744L66.4 736.8L56.5 736.8L54.3 744Z M57.9 731.8L65 731.8L61.45 719.8Z" fill="#6a6a6a" fill-rule="evenodd"/>
<circle cx="70" cy="762.4" r="2.2" fill="#6a6a6a"/>
<path d="M49.9 778.5L55.7 766.4L62.2 772.4L64.9 770.5L72.4 778.5Z" fill="#6a6a6a"/>
<path d="M50.5 754L50.5 761Q52.5 764 54.5 761L54.5 753.5" fill="none" stroke="#5b9bd5" stroke-width="1.2"/>
</svg>
<!-- right toolbar band -->
<div class="a" style="left:981px;top:168px;width:86px;height:620px;background:#f9f9f9"></div>
<div class="a" style="left:982px;top:170px;width:83px;height:617px;background:linear-gradient(90deg,#fafafa,#ededed);border-radius:0 4px 0 0"></div>
<div class="a" style="left:985px;top:173px;width:75px;height:2px;background:repeating-linear-gradient(90deg,#a8a8a8 0 2px,transparent 2px 4px)"></div>
<svg style="left:975px;top:165px" width="95" height="625" viewBox="975 165 95 625">
<line x1="1022.5" y1="182" x2="1022.5" y2="786" stroke="#bdbdbd" stroke-width="1"/>
<g stroke="#bdbdbd" stroke-width="1.2"><line x1="986" y1="370.5" x2="1016" y2="370.5"/><line x1="986" y1="414.5" x2="1016" y2="414.5"/></g>
<g stroke="#333" stroke-width="1.3" fill="none">
<path d="M986.4 182.2L986.4 211.9M1015.7 182.2L1015.7 211.9"/>
<path d="M986.2 231.5L997.6 220.5M1004.3 249.7L1015.7 238.3"/>
<circle cx="1001.2" cy="272.8" r="14.5"/>
<circle cx="1001.2" cy="311" r="14.5"/>
<path d="M986.2 356.9L1005.9 337.2M986 361.5L1016 361.5"/>
<path d="M986.2 404.5L992.4 382.2M1009.5 404.5L1015.7 382.2"/>
<!-- scale -->
<path d="M1030.8 348L1030.8 334.5L1059.3 334.5L1059.3 362.9L1048 362.9"/>
<!-- offset -->
<path d="M1059.7 380.8L1051 380.8L1051 374.8L1037.5 374.8L1037.5 380.8L1035 380.8Q1030.5 380.8 1030.5 385.5L1030.5 395.5Q1030.5 399.2 1034 399.2L1059.7 399.2"/>
<!-- array -->
<rect x="1030.8" y="410.6" width="12.5" height="12.6"/><rect x="1046.6" y="410.6" width="12.7" height="12.6"/><rect x="1046.6" y="426.6" width="12.7" height="12.7"/>
<!-- mirror -->
<path d="M1030.8 477L1042.6 449.5L1042.6 477Z"/>
<!-- fillet/chamfer rect sides -->
<path d="M1030.8 548L1030.8 553.3L1059.3 553.3L1059.3 524.3L1054 524.3"/>
<path d="M1030.8 591.5L1059.3 591.5L1059.3 562.3L1050 562.3"/>
<!-- break/extend -->
<path d="M1030.1 614.2L1035.7 614.2M1036.4 626L1043.2 602.9"/>
<path d="M1030 649.6L1049 649.6M1030 658L1036 658M1052.8 664L1059.9 642"/>
<!-- join -->
<path d="M1035.5 719.7L1032.5 719.7Q1030.5 719.7 1030.5 722L1030.5 738.5Q1030.5 740.7 1032.5 740.7L1057.5 740.7Q1059.7 740.7 1059.7 738.5L1059.7 722Q1059.7 719.7 1057.5 719.7L1054.5 719.7"/>
<path d="M1030 767L1038 767M1052 767L1060 767" stroke-width="1.4"/>
</g>
<g stroke="#5b9bd5" stroke-width="1.5" fill="none">
<path d="M995 191.2L1007 191.2"/>
<path d="M996 230.5L1005 239.5"/>
<path d="M1001.5 273.5L994.5 266"/>
<path d="M995.5 305L1006.5 316.5"/>
<path d="M1004 344Q1008.5 350 1009 356"/>
<path d="M997 390L1007 390"/>
<path d="M1030.8 548L1054 524.5"/>
<path d="M1031 583Q1031 563 1050 562.3"/>
<path d="M1043.5 614.2L1060 614.2" stroke-dasharray="4 2.5"/>
<path d="M1037 658L1049 658" stroke-dasharray="4 2"/>
<rect x="1030.8" y="426.6" width="12.5" height="12.7" stroke-width="1.2"/>
</g>
<g stroke="#333" stroke-width="1.2" fill="none" stroke-dasharray="2.2 1.8">
<path d="M1030.8 548L1030.8 524.3L1054 524.3"/><path d="M1030.8 583L1030.8 562.3L1050 562.3"/>

</g>
<path d="M1052 649.6L1046.5 646.5L1046.5 652.7Z" fill="#333"/>
<path d="M1030.6 507.4C1031 498 1033 493.4 1036.6 493.4C1040 493.4 1042 498 1044 501.5C1046 504.5 1048 505.7 1050.4 505.7C1054 505.7 1057.5 502.5 1059.6 498.8" fill="none" stroke="#222" stroke-width="1.7" stroke-dasharray="3.5 1"/>
<!-- arrowheads blue -->
<g fill="#5b9bd5">
<path d="M987.5 191.2L996 186L996 196.4Z M1014.8 191.2L1006.3 186L1006.3 196.4Z"/>
<path d="M991.5 225.5L1001 228L994 235Z M1010.5 244.5L1001 242L1008 235Z"/>
<path d="M991.5 263L1000.5 265.5L994 272Z"/>
<path d="M991.5 301L1001 303.5L994 310Z M1010.5 320.5L1001 318L1008 311Z"/>
<path d="M1003.5 341.5L1003 350L1010 346Z M1009.5 361L1005 353.5L1013 353Z"/>
<path d="M991.5 390L999 385.5L999 394.5Z M1011.8 390L1004.3 385.5L1004.3 394.5Z"/>
<path d="M1046.8 449L1046.8 477.4L1059.7 477.4Z"/>
<path d="M1047.5 689.3L1059.9 678L1059.9 693.5L1047.5 705.3Z"/>
<rect x="1036" y="717.2" width="5" height="5"/><rect x="1049.3" y="717.2" width="5" height="5"/>
<path d="M1038 761.2L1044.2 767L1038 772.9Z M1052 761.2L1045.8 767L1052 772.9Z"/>
</g>
<!-- eraser -->
<path d="M1049.8 182.2L1059.7 191.7L1047.2 203.6L1038.4 194.8Z" fill="#ffc800"/>
<path d="M1038.4 194.8L1047.2 203.6L1045.2 205.7L1035.9 196.7Z" fill="#fff"/>
<path d="M1035.9 196.7L1045.2 205.7L1039.5 211.4L1030.2 202.6Z" fill="#ff4400"/>
<line x1="1030.2" y1="211.4" x2="1059.9" y2="211.4" stroke="#5b9bd5" stroke-width="1.2"/>
<!-- match prop -->
<circle cx="1036.4" cy="226.9" r="6.2" fill="#6a6a6a"/>
<path d="M1044 225.5L1052.5 225.5L1052.5 230" fill="none" stroke="#6a6a6a" stroke-width="1.5"/>
<path d="M1049 229.5L1056 229.5L1052.5 234Z" fill="#6a6a6a"/>
<circle cx="1054" cy="242.4" r="6.2" fill="#5b9bd5"/>
<circle cx="1044.7" cy="242.4" r="7" fill="#f1f1f1"/>
<circle cx="1044.7" cy="242.4" r="6.2" fill="#5b9bd5"/>
<!-- move -->
<path d="M1045 258L1050.5 264.5L1047.3 264.5L1047.3 270.7L1053.5 270.7L1053.5 267.5L1060 273L1053.5 278.5L1053.5 275.3L1047.3 275.3L1047.3 281.5L1050.5 281.5L1045 288L1039.5 281.5L1042.7 281.5L1042.7 275.3L1036.5 275.3L1036.5 278.5L1030 273L1036.5 267.5L1036.5 270.7L1042.7 270.7L1042.7 264.5L1039.5 264.5Z" fill="#6a6a6a"/>
<circle cx="1045" cy="273" r="1.5" fill="#f1f1f1"/>
<!-- rotate -->
<path d="M1049 300Q1043 298 1037 301Q1030 306 1030 313Q1031 321 1037 324Q1045 327 1050 322" fill="none" stroke="#333" stroke-width="1.3"/>
<path d="M1046 305L1057 296L1058 308.4Z" fill="#6a6a6a"/>
<!-- scale fill -->
<rect x="1030.4" y="348.6" width="14.8" height="14.7" rx="1.5" fill="#6a6a6a"/>
<!-- offset inner -->
<path d="M1059.7 385.8L1046.5 385.8L1046.5 378.5L1040.5 378.5L1040.5 385.8L1037.5 385.8Q1034.5 385.8 1034.5 388.5L1034.5 392.5Q1034.5 395 1037 395L1059.7 395" fill="none" stroke="#8fb4d8" stroke-width="1.1"/>
<!-- draworders -->
<rect x="986" y="422" width="13.4" height="13" fill="#6a6a6a"/><rect x="1002.5" y="438.6" width="13.4" height="13" fill="#6a6a6a"/>
<rect x="992.4" y="428.6" width="17.1" height="16.7" fill="#5b9bd5" stroke="#f4f4f4" stroke-width="0.8"/>
<rect x="992.4" y="466.5" width="17.1" height="16.6" fill="#5b9bd5"/>
<rect x="986" y="460.3" width="13.4" height="13" fill="#6a6a6a" stroke="#f4f4f4" stroke-width="0.8"/><rect x="1002.5" y="476.9" width="13.4" height="12.9" fill="#6a6a6a" stroke="#f4f4f4" stroke-width="0.8"/>
<rect x="995.5" y="507.8" width="20.4" height="19.8" fill="#6a6a6a"/>
<rect x="986" y="497.9" width="19.9" height="20.2" fill="#5b9bd5" stroke="#f4f4f4" stroke-width="0.8"/>
<rect x="986" y="536.2" width="19.9" height="19.7" fill="#5b9bd5"/>
<rect x="995.5" y="545.8" width="20.4" height="19.9" fill="#6a6a6a" stroke="#f4f4f4" stroke-width="0.8"/>
<!-- box3d -->
<path d="M1030.1 688.8L1040.5 677.5L1059.9 677.5L1047.3 688.8Z" fill="#6a6a6a"/>
<rect x="1030.1" y="689.8" width="16.6" height="15.5" fill="#6a6a6a"/>
</svg>
<!-- layout tabs -->
<div class="a" style="left:82px;top:771px;width:898px;height:17px;background:#f0f0f0"></div>
<div class="a" style="left:1px;top:787px;width:1066px;height:7px;background:#e4e4e4"></div>
<svg style="left:80px;top:770px" width="260" height="20" viewBox="80 770 260 20">
<rect x="83" y="771.5" width="15" height="15.5" fill="#f0f0f0" stroke="#d0d0d0"/>
<rect x="99" y="771.5" width="15.5" height="15.5" fill="#f0f0f0" stroke="#d0d0d0"/>
<path d="M93.5 775.5L88.5 779.5L93.5 783.5Z M104 775.5L109 779.5L104 783.5Z" fill="#808080"/>
<path d="M115.6 771L122.6 787.5L154.9 787.5L162.6 771Z" fill="#fcfcfc"/>
<path d="M115.6 771L122.6 787.5L246.7 787.5L254.4 771M154.9 787.5L162.6 771M158 771L165 787.5M199 787.5L206.5 771M201 771L208 787.5" fill="none" stroke="#111" stroke-width="1"/>
</svg>
<div class="t" style="left:126px;top:772px;font-size:12.5px">模型</div>
<div class="t" style="left:165px;top:772px;font-size:12.5px">布局1</div>
<div class="t" style="left:211px;top:772px;font-size:12.5px">布局2</div>
<!-- command -->
<div class="a" style="left:1px;top:793px;width:1065px;height:2px;background:#6d6d6d"></div>
<div class="a" style="left:3px;top:795px;width:1063px;height:53px;background:#fff;border-left:1px solid #8a8a8a"></div>
<div class="a" style="left:4px;top:827px;width:1061px;height:1px;background:#a0a0a0"></div>
<div class="a" style="left:1048px;top:828px;width:17px;height:20px;background:#f0f0f0"></div>
<div class="a" style="left:1048px;top:795px;width:17px;height:32px;background:#f0f0f0"></div>
<svg style="left:1048px;top:795px" width="17" height="32" viewBox="0 0 17 32">
<path d="M4.5 11L8.5 7L12.5 11M4.5 22L8.5 26L12.5 22" fill="none" stroke="#606060" stroke-width="1.5"/>
</svg>
<div class="a" style="left:977px;top:830px;width:71px;height:17px;background:#f0f0f0"></div>
<div class="a" style="left:993px;top:830px;width:17px;height:17px;background:#cdcdcd"></div>
<svg style="left:977px;top:830px" width="71" height="17" viewBox="0 0 71 17">
<path d="M7 4.5L3 8.5L7 12.5M63 4.5L67 8.5L63 12.5" fill="none" stroke="#606060" stroke-width="1.5"/>
</svg>
<div class="t cm" style="left:13px;top:794px">指定对角点:</div>
<div class="t cm" style="left:98px;top:794px">找到</div>
<div class="t cm mo" style="left:131px;top:794px">4</div>
<div class="t cm" style="left:145px;top:794px">个，</div>
<div class="t cm" style="left:172px;top:794px">总计</div>
<div class="t cm mo" style="left:204px;top:794px">4</div>
<div class="t cm" style="left:218px;top:794px">个</div>
<div class="t cm" style="left:13px;top:812px">选择对象:</div>
<div class="t cm" style="left:5px;top:828px">选择</div>
<div class="t cm" style="left:32px;top:828px">[</div>
<div class="t cm" style="left:38px;top:828px">中心点</div>
<div class="t cm" style="left:78px;top:828px">]:</div>
<!-- status -->
<div class="a" style="left:1px;top:848px;width:1066px;height:22px;background:#f0f0f0"></div>
<div class="t" style="left:4px;top:853px;font-size:12.6px;letter-spacing:0.05px">498203.590364,&nbsp; 171646.723368,&nbsp; 0.000000</div>
<div class="t" style="left:534px;top:853px">栅格</div>
<div class="a sb" style="left:568px;top:851px;width:34px">正交</div>
<div class="t" style="left:606px;top:853px">极轴</div>
<div class="a sb" style="left:640px;top:851px;width:57px">对象捕捉</div>
<div class="a sb" style="left:700px;top:851px;width:57px">对象追踪</div>
<div class="a sb" style="left:760px;top:851px;width:36px">DYN</div>
<div class="a sb" style="left:798px;top:851px;width:33px">线宽</div>
<div class="t" style="left:836px;top:853px;color:#1a1aff">提交软件问题或增加新功能</div>
<div class="a" style="left:993px;top:852px;width:70px;height:18px;background:#fff"></div>
<svg style="left:990px;top:850px" width="30" height="20" viewBox="990 850 30 20">
<path d="M996.2 866.5L998.3 858L999.5 866.5Z M999 853L1003.8 853L1006.8 867L1001.8 867Z M1005.1 853L1009.9 853L1013 867L1008 867Z" fill="#12a89a"/>
<path d="M995 866.8L1012 857" stroke="#fff" stroke-width="1.2"/>
</svg>
<div class="t" style="left:1016px;top:853px;color:#1e2a55;font-size:13px">MxCAD</div>
</body></html>
